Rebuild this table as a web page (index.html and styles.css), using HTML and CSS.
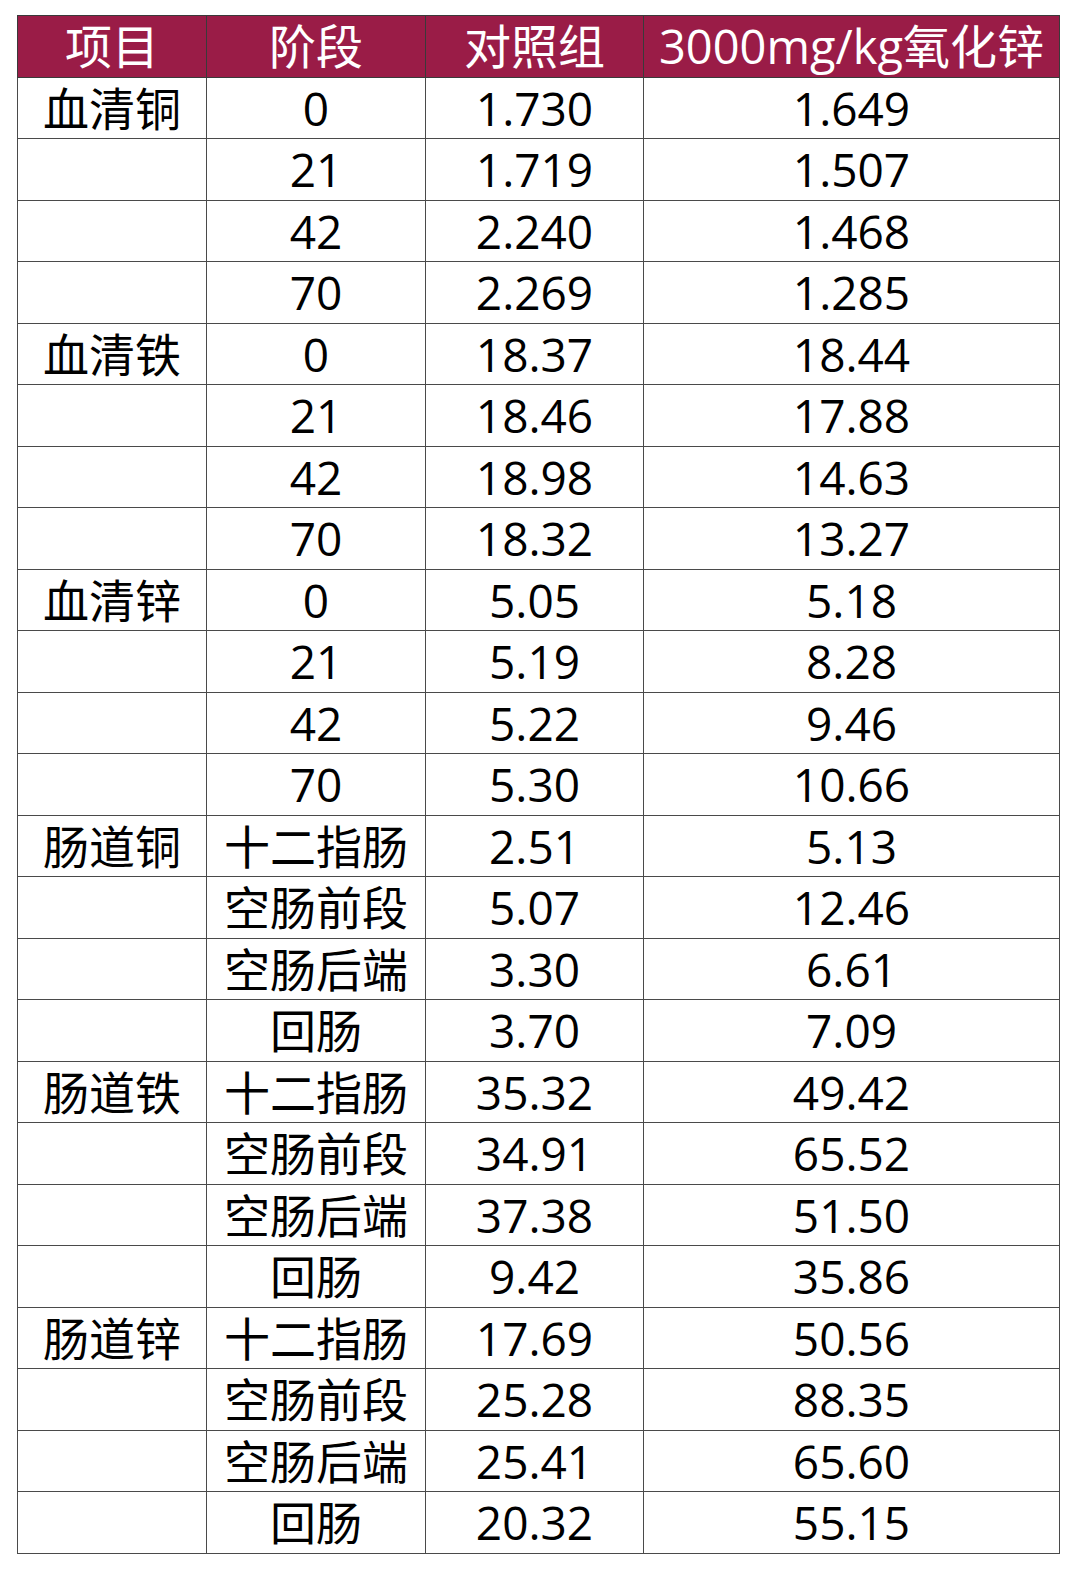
FILE: index.html
```html
<!DOCTYPE html>
<html lang="zh-CN">
<head>
<meta charset="utf-8">
<title>表格</title>
<link rel="stylesheet" href="styles.css">
</head>
<body>
<table class="data">
  <colgroup>
    <col class="c1"><col class="c2"><col class="c3"><col class="c4">
  </colgroup>
  <thead>
    <tr><th>项目</th><th>阶段</th><th>对照组</th><th>3000mg/kg氧化锌</th></tr>
  </thead>
  <tbody>
    <tr><td>血清铜</td><td>0</td><td>1.730</td><td>1.649</td></tr>
    <tr><td></td><td>21</td><td>1.719</td><td>1.507</td></tr>
    <tr><td></td><td>42</td><td>2.240</td><td>1.468</td></tr>
    <tr><td></td><td>70</td><td>2.269</td><td>1.285</td></tr>
    <tr><td>血清铁</td><td>0</td><td>18.37</td><td>18.44</td></tr>
    <tr><td></td><td>21</td><td>18.46</td><td>17.88</td></tr>
    <tr><td></td><td>42</td><td>18.98</td><td>14.63</td></tr>
    <tr><td></td><td>70</td><td>18.32</td><td>13.27</td></tr>
    <tr><td>血清锌</td><td>0</td><td>5.05</td><td>5.18</td></tr>
    <tr><td></td><td>21</td><td>5.19</td><td>8.28</td></tr>
    <tr><td></td><td>42</td><td>5.22</td><td>9.46</td></tr>
    <tr><td></td><td>70</td><td>5.30</td><td>10.66</td></tr>
    <tr><td>肠道铜</td><td>十二指肠</td><td>2.51</td><td>5.13</td></tr>
    <tr><td></td><td>空肠前段</td><td>5.07</td><td>12.46</td></tr>
    <tr><td></td><td>空肠后端</td><td>3.30</td><td>6.61</td></tr>
    <tr><td></td><td>回肠</td><td>3.70</td><td>7.09</td></tr>
    <tr><td>肠道铁</td><td>十二指肠</td><td>35.32</td><td>49.42</td></tr>
    <tr><td></td><td>空肠前段</td><td>34.91</td><td>65.52</td></tr>
    <tr><td></td><td>空肠后端</td><td>37.38</td><td>51.50</td></tr>
    <tr><td></td><td>回肠</td><td>9.42</td><td>35.86</td></tr>
    <tr><td>肠道锌</td><td>十二指肠</td><td>17.69</td><td>50.56</td></tr>
    <tr><td></td><td>空肠前段</td><td>25.28</td><td>88.35</td></tr>
    <tr><td></td><td>空肠后端</td><td>25.41</td><td>65.60</td></tr>
    <tr><td></td><td>回肠</td><td>20.32</td><td>55.15</td></tr>
  </tbody>
</table>
</body>
</html>
```

FILE: styles.css
```css
html, body {
  margin: 0;
  padding: 0;
  background: #ffffff;
}
body {
  padding: 15px 0 0 17px;
  font-family: "Open Sans", "Noto Sans CJK SC", sans-serif;
}
.data {
  border-collapse: collapse;
  table-layout: fixed;
  width: 1042px;
  font-size: 46px;
  color: #000;
}
.c1 { width: 189px; }
.c2 { width: 219px; }
.c3 { width: 218px; }
.c4 { width: 416px; }
.data th, .data td {
  border: 1.5px solid #4a4a4a;
  height: 61.5px;
  padding: 0;
  text-align: center;
  vertical-align: middle;
  line-height: 1;
  white-space: nowrap;
  box-sizing: border-box;
}
.data th {
  background: #9a1c47;
  color: #ffffff;
  font-weight: normal;
  font-size: 47px;
  border-color: #3a3a3a;
}
```
